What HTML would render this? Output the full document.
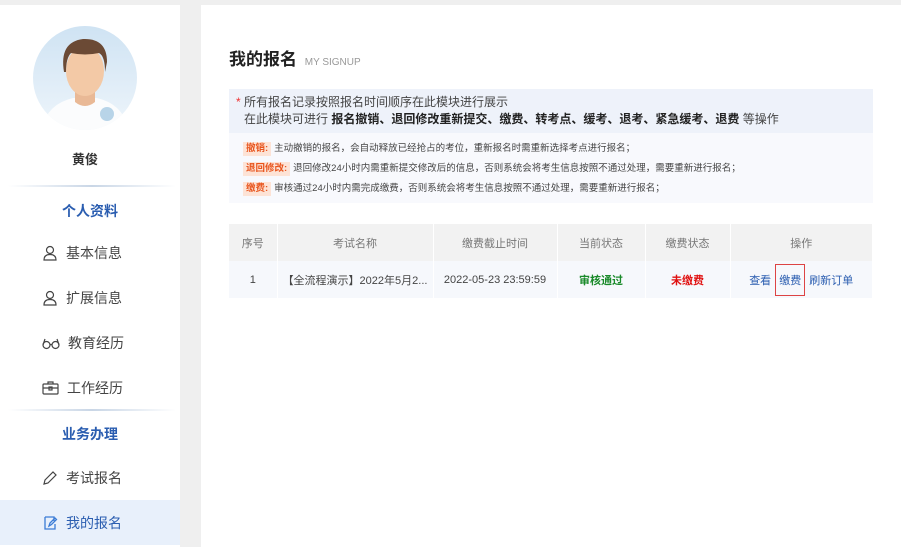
<!DOCTYPE html>
<html><head><meta charset="utf-8"><style>
*{margin:0;padding:0;box-sizing:border-box}
body{width:901px;height:547px;background:#efefef;font-family:"Liberation Sans","Noto Sans CJK SC",sans-serif;position:relative;overflow:hidden;color:#333}
.side{position:absolute;left:0;top:5px;width:180px;height:542px;background:#fff}
.main{position:absolute;left:201px;top:5px;width:700px;height:542px;background:#fff}
.ab{position:absolute}
.item{position:absolute;left:0;width:180px;height:45px;display:flex;align-items:center;padding-left:42px;font-size:14px;color:#444}
.item svg{margin-right:8px}
.sec{position:absolute;left:0;width:180px;text-align:center;font-size:14px;font-weight:bold;color:#2a5db0}
.div{position:absolute;left:8px;width:168px;height:2px;background:linear-gradient(90deg,#fff,#c9d6e6 50%,#fff)}
table{border-collapse:collapse;position:absolute;left:229px;top:224px;width:644px;font-size:11px;text-align:center}
th{background:#f2f2f2;color:#777;font-weight:normal;height:37px;border-right:1px solid #fff}
td{background:#f6f8fc;height:37px;border-right:1px solid #fff;color:#444}
.tag{display:inline-block;background:#fde3d6;color:#e8541d;font-weight:bold;padding:0 3px;margin-right:3px;line-height:14px}
</style></head><body>
<div class="side">
  <svg class="ab" style="left:33px;top:21px" width="104" height="104" viewBox="0 0 104 104">
    <defs><linearGradient id="g" x1="0" y1="0" x2="0" y2="1"><stop offset="0" stop-color="#cfe3f3"/><stop offset="1" stop-color="#eef5fb"/></linearGradient>
    <clipPath id="c"><circle cx="52" cy="52" r="52"/></clipPath></defs>
    <circle cx="52" cy="52" r="52" fill="url(#g)"/>
    <g clip-path="url(#c)">
      <path d="M8 104 Q14 78 40 72 L64 72 Q90 78 96 104Z" fill="#fbfcfd"/>
      <path d="M42 62 L42 76 Q52 84 62 76 L62 62Z" fill="#e9b996"/>
      <ellipse cx="52" cy="45" rx="19" ry="25" fill="#f3c9a6"/>
      <path d="M31 46 Q26 16 50 13 Q74 12 74 36 L72 46 Q72 30 66 27 Q52 30 38 27 Q33 32 33 46Z" fill="#6b4a35"/>
      <circle cx="74" cy="88" r="7" fill="#b8d4e8"/>
    </g>
  </svg>
  <div class="ab" style="left:0;top:144px;width:170px;text-align:center;font-size:13px;font-weight:bold">黄俊</div>
  <div class="div" style="top:180px"></div>
  <div class="sec" style="top:196px">个人资料</div>
  <div class="item" style="top:225px"><svg width="16" height="16" viewBox="0 0 16 16" fill="none" stroke="#444" stroke-width="1.2"><circle cx="8" cy="5" r="3.5"/><path d="M2 15 Q2 9.5 8 9.5 Q14 9.5 14 15Z"/></svg>基本信息</div>
  <div class="item" style="top:270px"><svg width="16" height="16" viewBox="0 0 16 16" fill="none" stroke="#444" stroke-width="1.2"><circle cx="8" cy="5" r="3.5"/><path d="M2 15 Q2 9.5 8 9.5 Q14 9.5 14 15Z"/></svg>扩展信息</div>
  <div class="item" style="top:315px"><svg width="18" height="16" viewBox="0 0 18 16" fill="none" stroke="#444" stroke-width="1.2"><circle cx="4.5" cy="10" r="3.5"/><circle cx="13.5" cy="10" r="3.5"/><path d="M8 10 Q9 9 10 10 M1 10 L3 4 M17 10 L15 4"/></svg>教育经历</div>
  <div class="item" style="top:360px"><svg width="17" height="16" viewBox="0 0 17 16" fill="none" stroke="#444" stroke-width="1.2"><rect x="1" y="4" width="15" height="10" rx="1"/><path d="M6 4V2h5v2M1 8h15"/><rect x="7" y="7" width="3" height="3"/></svg>工作经历</div>
  <div class="div" style="top:404px"></div>
  <div class="sec" style="top:419px">业务办理</div>
  <div class="item" style="top:450px"><svg width="16" height="16" viewBox="0 0 16 16" fill="none" stroke="#444" stroke-width="1.2"><path d="M2 14 L3 10 L11 2 L14 5 L6 13Z"/></svg>考试报名</div>
  <div class="item" style="top:495px;background:#e8f0fb;color:#2a5db0"><svg width="16" height="16" viewBox="0 0 16 16" fill="none" stroke="#3a7bd5" stroke-width="1.3"><path d="M3 2h9v4M13 9v5H3V2"/><path d="M7 11 L8 8 L13 3 L14.5 4.5 L9.5 9.5Z"/></svg>我的报名</div>
</div>
<div class="main"></div>
<div class="ab" style="left:229px;top:45px;font-size:17px;font-weight:bold;color:#222">我的报名 <span style="font-size:10px;font-weight:normal;color:#999;margin-left:3px">MY SIGNUP</span></div>
<div class="ab" style="left:229px;top:89px;width:644px;height:44px;background:#eef2fa;padding:5px 0 0 7px;font-size:12px;line-height:17px;color:#444">
<span style="color:#e33">*</span> 所有报名记录按照报名时间顺序在此模块进行展示<br>
<span style="margin-left:8px">在此模块可进行 <b style="color:#222">报名撤销、退回修改重新提交、缴费、转考点、缓考、退考、紧急缓考、退费</b> 等操作</span></div>
<div class="ab" style="left:229px;top:133px;width:644px;height:70px;background:#f8f9fd;padding:6px 0 0 14px;font-size:9.5px;line-height:20px;color:#444">
<div><span class="tag">撤销:</span>主动撤销的报名，会自动释放已经抢占的考位，重新报名时需重新选择考点进行报名；</div>
<div><span class="tag">退回修改:</span>退回修改24小时内需重新提交修改后的信息，否则系统会将考生信息按照不通过处理，需要重新进行报名；</div>
<div><span class="tag">缴费:</span>审核通过24小时内需完成缴费，否则系统会将考生信息按照不通过处理，需要重新进行报名；</div>
</div>
<table>
<tr><th style="width:48px">序号</th><th style="width:156px">考试名称</th><th style="width:124px">缴费截止时间</th><th style="width:88px">当前状态</th><th style="width:85px">缴费状态</th><th>操作</th></tr>
<tr><td>1</td><td>【全流程演示】2022年5月2...</td><td>2022-05-23 23:59:59</td><td style="color:#1a8a2a;font-weight:bold">审核通过</td><td style="color:#e01010;font-weight:bold">未缴费</td>
<td style="color:#2a5db0">查看 <span style="display:inline-block;border:1px solid #d44;padding:7px 3px;margin:0 1px">缴费</span> 刷新订单</td></tr>
</table>
</body></html>
